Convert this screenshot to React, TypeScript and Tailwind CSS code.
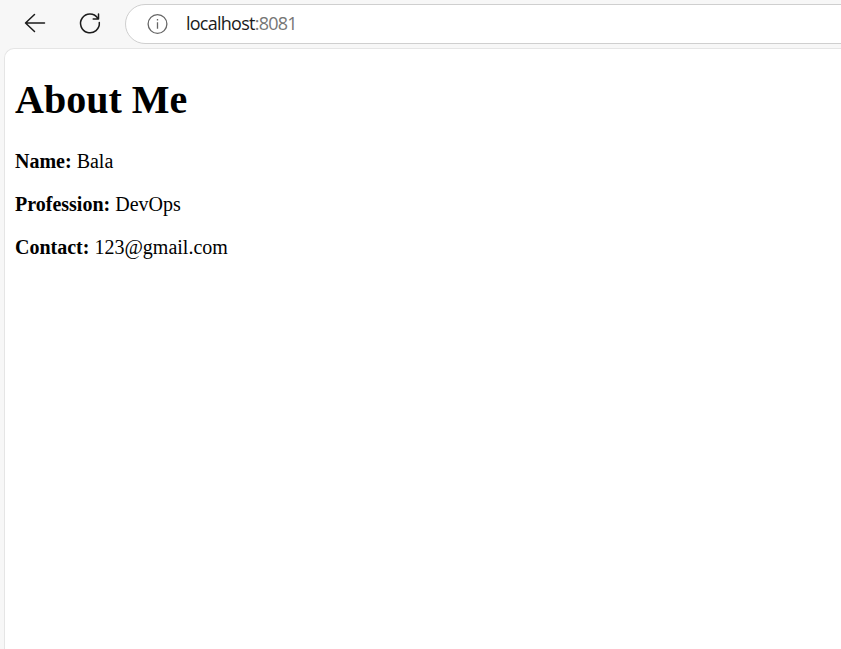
export default function App() {
  return (
    <div className="flex h-[649px] w-[841px] flex-col overflow-hidden bg-[#f7f7f7]">
      <header className="flex h-12 shrink-0 items-center pl-[23px]">
        <svg className="h-6 w-6 shrink-0" viewBox="0 0 24 24" fill="none" stroke="#1b1b1b" strokeWidth="1.5" strokeLinecap="round" strokeLinejoin="round">
          <path d="M21.5 11H2.5M11.5 2.5L2.5 11L11.5 19.5" />
        </svg>
        <svg className="ml-[31px] h-6 w-6 shrink-0" viewBox="0 0 24 24" fill="none" stroke="#1b1b1b" strokeWidth="1.5" strokeLinecap="round" strokeLinejoin="round">
          <path d="M21.3 10.5A9.4 9.4 0 1 1 19.7 6.1M20.5 2V6.9H15.2" />
        </svg>
        <div className="ml-[23px] flex h-10 w-[760px] shrink-0 items-center rounded-full border border-[#cfcfcf] bg-white pl-[21px]">
          <svg className="h-[22px] w-[22px] shrink-0" viewBox="0 0 22 22" fill="none" stroke="#666" strokeWidth="1.3">
            <circle cx="10.5" cy="11" r="9.4" />
            <path d="M10.5 9.2V15.8M10.5 6V7.6" />
          </svg>
          <span className="ml-[17px] pb-0.5 font-['Open_Sans',sans-serif] text-[18px] leading-6 tracking-[-0.75px] text-[#1b1b1b]">localhost<span className="text-[#767676]">:8081</span></span>
        </div>
      </header>
      <main className="ml-1 w-[860px] grow rounded-tl-[10px] border-l border-t border-[#e5e5e5] bg-white pl-2.5 font-['Liberation_Serif',serif] text-[20px] leading-[23px] text-black">
        <h1 className="mt-[28px] text-[40px] font-bold leading-[46px]">About Me</h1>
        <p className="mt-[27px]"><b>Name:</b> Bala</p>
        <p className="mt-5"><b>Profession:</b> DevOps</p>
        <p className="mt-5"><b>Contact:</b> 123@gmail.com</p>
      </main>
    </div>
  );
}
